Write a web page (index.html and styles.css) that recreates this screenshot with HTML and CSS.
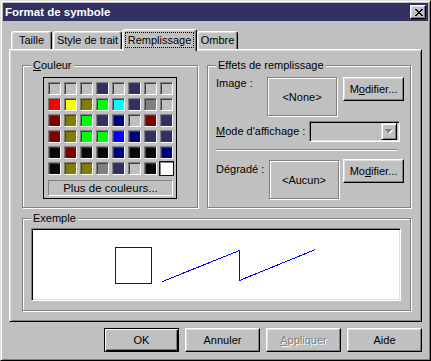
FILE: index.html
```html
<!DOCTYPE html>
<html lang="fr">
<head>
  <meta charset="UTF-8" />
  <meta name="viewport" content="width=device-width, initial-scale=1.0"/>
  <title>Format de symbole</title>
  <link rel="stylesheet" href="styles.css">
</head>
<body>
<div class="window">
  <div class="titlebar">
    <span class="title">Format de symbole</span>
    <div class="close-btn">
      <svg width="8" height="7" viewBox="0 0 8 7" shape-rendering="crispEdges">
        <path d="M0 0h2v1h-2z M6 0h2v1h-2z M1 1h2v1h-2z M5 1h2v1h-2z M2 2h4v1h-4z M3 3h2v1h-2z M2 4h4v1h-4z M1 5h2v1h-2z M5 5h2v1h-2z M0 6h2v1h-2z M6 6h2v1h-2z" fill="#000"/>
      </svg>
    </div>
  </div>

  <div class="dialog-body">
    <!-- tabs -->
    <div class="tabs">
      <div class="tab tab-taille">Taille</div>
      <div class="tab tab-style">Style de trait</div>
      <div class="tab tab-fill active"><span class="focus">Remplissage</span></div>
      <div class="tab tab-ombre">Ombre</div>
    </div>

    <div class="panel">
      <div class="panel-row">
        <div class="group group-color">
          <div class="group-title"><u>C</u>ouleur</div>
          <div class="palette">
            <div class="swatches">
              <div class="swatch c-gray"></div><div class="swatch c-gray"></div><div class="swatch c-gray"></div><div class="swatch c-slate"></div><div class="swatch c-gray"></div><div class="swatch c-slate"></div><div class="swatch c-gray"></div><div class="swatch c-gray"></div>
              <div class="swatch c-red"></div><div class="swatch c-yellow"></div><div class="swatch c-olive"></div><div class="swatch c-lime"></div><div class="swatch c-cyan"></div><div class="swatch c-slate"></div><div class="swatch c-dgray"></div><div class="swatch c-gray"></div>
              <div class="swatch c-maroon"></div><div class="swatch c-olive"></div><div class="swatch c-lime"></div><div class="swatch c-slate"></div><div class="swatch c-navy"></div><div class="swatch c-gray"></div><div class="swatch c-maroon"></div><div class="swatch c-slate"></div>
              <div class="swatch c-maroon"></div><div class="swatch c-olive"></div><div class="swatch c-lime"></div><div class="swatch c-lime"></div><div class="swatch c-blue"></div><div class="swatch c-navy"></div><div class="swatch c-slate"></div><div class="swatch c-slate"></div>
              <div class="swatch c-black"></div><div class="swatch c-maroon"></div><div class="swatch c-black"></div><div class="swatch c-black"></div><div class="swatch c-navy"></div><div class="swatch c-black"></div><div class="swatch c-black"></div><div class="swatch c-navy"></div>
              <div class="swatch c-black"></div><div class="swatch c-olive"></div><div class="swatch c-olive"></div><div class="swatch c-dgray"></div><div class="swatch c-slate"></div><div class="swatch c-gray"></div><div class="swatch c-black"></div><div class="swatch c-white selected"></div>
            </div>
            <div class="more-btn">Plus de couleurs...</div>
          </div>
        </div>

        <div class="group group-effects">
          <div class="group-title">Effets de remplissage</div>
          <div class="effects-body">
            <div class="fill-row">
              <div class="field-label label-image">Image :</div>
              <div class="value-box">&lt;None&gt;</div>
              <div class="btn btn-modify">M<u>o</u>difier...</div>
            </div>
            <div class="mode-row">
              <div class="field-label label-mode"><u>M</u>ode d'affichage :</div>
              <div class="combo">
                <div class="combo-btn">
                  <svg width="8" height="5" viewBox="0 0 8 5" shape-rendering="crispEdges">
                    <path d="M1 1h7v1h-1v1h-1v1h-1v1h-1v-1h-1v-1h-1v-1h-1z" fill="#fff"/>
                    <path d="M0 0h7v1h-1v1h-1v1h-1v1h-1v-1h-1v-1h-1v-1h-1z" fill="#808080"/>
                  </svg>
                </div>
              </div>
            </div>
            <div class="separator"></div>
            <div class="fill-row gradient-row">
              <div class="field-label label-gradient">Dégradé :</div>
              <div class="value-box">&lt;Aucun&gt;</div>
              <div class="btn btn-modify">Mo<u>d</u>ifier...</div>
            </div>
          </div>
        </div>
      </div>

      <div class="group group-example">
        <div class="group-title">Exemple</div>
        <div class="preview">
          <svg width="366" height="69" viewBox="0 0 366 69" shape-rendering="crispEdges">
            <rect x="83.5" y="18.5" width="36" height="36" fill="none" stroke="#0000ff" stroke-width="1"/>
            <polyline points="130.5,52.5 207.5,21.5 207.5,51.5 283.5,20.5" fill="none" stroke="#0000ff" stroke-width="1"/>
          </svg>
        </div>
      </div>
    </div>

    <div class="dialog-buttons">
      <div class="btn btn-main default">OK</div>
      <div class="btn btn-main">Annuler</div>
      <div class="btn btn-main disabled"><u>A</u>ppliquer</div>
      <div class="btn btn-main">Aide</div>
    </div>
  </div>
</div>
</body>
</html>
```

FILE: styles.css
```css
* {
  box-sizing: border-box;
}
body {
  margin: 0;
  background: #c0c0c0;
  font-family: "Liberation Sans", Arial, sans-serif;
  font-size: 11px;
  color: #000;
}
u {
  text-decoration: underline;
  text-underline-offset: 1px;
}

/* window frame */
.window {
  width: 431px;
  height: 361px;
  border: 1px solid;
  border-color: #dfdfdf #000 #000 #dfdfdf;
  box-shadow: inset 1px 1px #fff, inset -1px -1px #808080;
  padding: 2px;
  background: #c0c0c0;
  display: flex;
  flex-direction: column;
}
.titlebar {
  height: 18px;
  background: #303063;
  color: #fff;
  display: flex;
  align-items: center;
  justify-content: space-between;
  padding: 0 2px;
}
.title {
  font-weight: bold;
  font-size: 11.5px;
}
.close-btn {
  width: 16px;
  height: 14px;
  background: #c0c0c0;
  border: 1px solid;
  border-color: #fff #000 #000 #fff;
  box-shadow: inset -1px -1px #808080, inset 1px 1px #dfdfdf;
  display: flex;
  align-items: center;
  justify-content: center;
  padding-left: 1px;
}
.close-btn svg {
  display: block;
}

.dialog-body {
  padding: 8px 6px 0 6px;
}

/* tabs */
.tabs {
  display: flex;
  align-items: flex-end;
  height: 20px;
  padding-left: 2px;
}
.tab {
  height: 18px;
  border: 1px solid;
  border-bottom: none;
  border-color: #fff #000 transparent #fff;
  border-radius: 3px 3px 0 0;
  box-shadow: inset -1px 0 #808080, inset 1px 1px #dfdfdf;
  line-height: 16px;
  text-align: center;
  white-space: nowrap;
}
.tab-taille {
  width: 41px;
  margin-right: 1px;
}
.tab-style {
  width: 69px;
}
.tab-fill {
  width: 75px;
}
.tab-ombre {
  width: 41px;
}
.tab.active {
  height: 22px;
  margin-bottom: -2px;
  position: relative;
  z-index: 1;
  background: #c0c0c0;
  padding-top: 3px;
  line-height: 14px;
}
.focus {
  display: inline-block;
  height: 14px;
  padding: 0 2px;
  outline: 1px dotted #000;
}

/* tab page */
.panel {
  height: 273px;
  border: 1px solid;
  border-color: #fff #000 #000 #fff;
  box-shadow: inset 1px 1px #dfdfdf, inset -1px -1px #808080;
  padding: 15px 10px 10px 12px;
}
.panel-row {
  display: flex;
  gap: 9px;
}
.group {
  border: 1px solid #808080;
  box-shadow: inset 1px 1px #fff, 1px 1px #fff;
}
.group-title {
  display: table;
  margin: -7px 0 0 8px;
  padding: 0 2px;
  background: #c0c0c0;
  line-height: 13px;
}
.group-color {
  width: 176px;
  height: 143px;
}
.group-effects {
  width: 204px;
  height: 143px;
}
.group-example {
  width: 389px;
  height: 93px;
  margin-top: 10px;
}

/* colour palette */
.palette {
  width: 134px;
  margin: 5px auto 0;
  border: 1px solid #000;
  padding: 4px 3px 2px 4px;
}
.swatches {
  display: grid;
  grid-template-columns: repeat(8, 13px);
  grid-auto-rows: 13px;
  gap: 3px;
}
.swatch {
  border: 1px solid;
  border-color: #808080 #fff #fff #808080;
  box-shadow: inset 1px 1px #404040;
}
.swatch.selected {
  margin: -1px;
  width: 15px;
  height: 15px;
  border: 1px solid #000080;
  box-shadow: inset 1px 1px #808080;
}
.c-gray { background: #c0c0c0; }
.c-slate { background: #303063; }
.c-red { background: #ff0000; }
.c-yellow { background: #ffff00; }
.c-olive { background: #808000; }
.c-lime { background: #00ff00; }
.c-cyan { background: #00ffff; }
.c-dgray { background: #808080; }
.c-maroon { background: #800000; }
.c-navy { background: #000080; }
.c-blue { background: #0000ff; }
.c-black { background: #0a0a0a; }
.c-white { background: #fff; }

.more-btn {
  margin-top: 5px;
  height: 16px;
  border: 1px solid;
  border-color: #808080 #fff #fff #808080;
  text-align: center;
  line-height: 14px;
  font-size: 11.5px;
}

/* fill effects */
.effects-body {
  padding-left: 8px;
}
.fill-row {
  display: flex;
  align-items: flex-start;
  margin-top: 5px;
}
.field-label {
  line-height: 13px;
  white-space: nowrap;
}
.label-image {
  width: 51px;
}
.label-gradient {
  width: 53px;
  margin-top: 3px;
}
.label-mode {
  width: 93px;
}
.value-box {
  width: 70px;
  height: 39px;
  border: 1px solid #808080;
  box-shadow: 1px 1px #fff, inset 1px 1px #fff;
  display: flex;
  align-items: center;
  justify-content: center;
}
.btn {
  height: 24px;
  border: 1px solid;
  border-color: #fff #000 #000 #fff;
  box-shadow: inset -1px -1px #808080, inset 1px 1px #dfdfdf;
  display: flex;
  align-items: center;
  justify-content: center;
  white-space: nowrap;
}
.btn-modify {
  width: 61px;
  margin-left: 6px;
}
.gradient-row {
  margin-top: 9px;
}
.gradient-row .btn-modify {
  margin-left: 4px;
  margin-top: -1px;
}
.mode-row {
  display: flex;
  align-items: center;
  height: 21px;
  margin-top: 5px;
}
.combo {
  width: 91px;
  height: 21px;
  border: 1px solid;
  border-color: #808080 #fff #fff #808080;
  box-shadow: inset 1px 1px #000, inset -1px -1px #dfdfdf;
  padding: 1px 2px 1px 1px;
  display: flex;
  justify-content: flex-end;
}
.combo-btn {
  width: 16px;
  height: 17px;
  border: 1px solid;
  border-color: #dfdfdf #000 #000 #dfdfdf;
  box-shadow: inset 1px 1px #fff, inset -1px -1px #808080;
  display: flex;
  align-items: center;
  justify-content: center;
}
.combo-btn svg {
  display: block;
}
.separator {
  width: 181px;
  height: 2px;
  margin-top: 7px;
  border-top: 1px solid #808080;
  border-bottom: 1px solid #fff;
}

/* example */
.preview {
  width: 370px;
  height: 73px;
  margin: 3px 0 0 8px;
  background: #fff;
  border: 1px solid;
  border-color: #808080 #fff #fff #808080;
  box-shadow: inset 1px 1px #000, inset -1px -1px #dfdfdf;
}
.preview svg {
  display: block;
}

/* bottom buttons */
.dialog-buttons {
  display: flex;
  justify-content: flex-end;
  gap: 6px;
  margin-top: 6px;
}
.btn-main {
  width: 75px;
}
.btn.default {
  border: 1px solid #000;
  box-shadow: inset 1px 1px #fff, inset -1px -1px #000, inset -2px -2px #808080;
}
.btn.disabled {
  color: #808080;
  text-shadow: 1px 1px #fff;
}
```
